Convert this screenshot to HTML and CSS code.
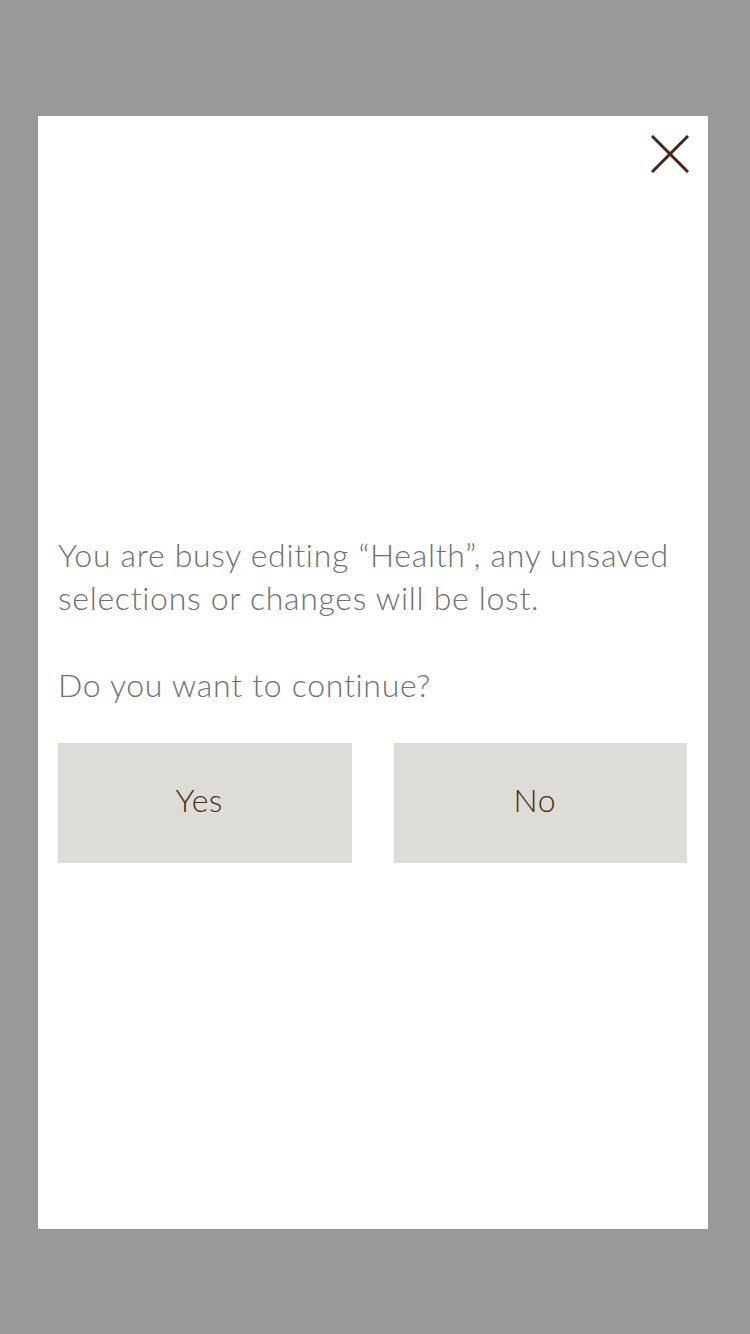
FILE: index.html
```html
<!DOCTYPE html>
<html>
<head>
<meta charset="utf-8">
<link rel="stylesheet" href="styles.css">
</head>
<body>
<div class="overlay">
  <div class="modal">
    <div class="modal-head">
      <button class="close" aria-label="Close">
        <svg width="38" height="38" viewBox="0 0 38 38"><path d="M1 1L37 37M37 1L1 37" stroke="#4a2511" stroke-width="3" fill="none"/></svg>
      </button>
    </div>
    <div class="modal-body">
      <p class="msg">You are busy editing “Health”, any unsaved selections or changes will be lost.</p>
      <p class="msg question">Do you want to continue?</p>
      <div class="actions">
        <button class="btn">Yes</button>
        <button class="btn">No</button>
      </div>
    </div>
  </div>
</div>
</body>
</html>
```
FILE: styles.css
```css
html, body {
  margin: 0;
  padding: 0;
  background: #999999;
}
.overlay {
  width: 750px;
  height: 1334px;
  padding-top: 116px;
  box-sizing: border-box;
}
.modal {
  margin-left: 38px;
  width: 670px;
  height: 1113px;
  background: #ffffff;
  box-sizing: border-box;
  padding: 19px 20px 0 20px;
  font-family: "Lato", "Liberation Sans", sans-serif;
  font-weight: 300;
}
.modal-head {
  display: flex;
  justify-content: flex-end;
}
.close {
  border: 0;
  background: none;
  padding: 0;
  width: 38px;
  height: 38px;
  margin-right: -1px;
  cursor: pointer;
}
.close svg { display: block; }
.modal-body {
  margin-top: 360px;
}
.msg {
  margin: 0;
  font-size: 32px;
  line-height: 43.3px;
  letter-spacing: 0.7px;
  color: #707070;
}
.question {
  margin-top: 43.3px;
}
.actions {
  display: flex;
  gap: 42px;
  margin-top: 37px;
  margin-right: 1px;
}
.btn {
  flex: 1;
  height: 120px;
  border: 0;
  background: #dddcd7;
  color: #4f2a12;
  font-family: inherit;
  font-weight: 300;
  font-size: 32px;
  letter-spacing: 0.5px;
  padding: 0 11px 7px 0;
}
```
